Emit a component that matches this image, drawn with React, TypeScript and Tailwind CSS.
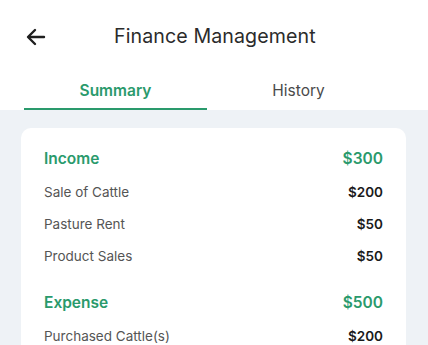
import React from "react";

interface Row {
  label: string;
  amount: string;
}

interface Section {
  title: string;
  total: string;
  rows: Row[];
}

const sections: Section[] = [
  {
    title: "Income",
    total: "$300",
    rows: [
      { label: "Sale of Cattle", amount: "$200" },
      { label: "Pasture Rent", amount: "$50" },
      { label: "Product Sales", amount: "$50" },
    ],
  },
  {
    title: "Expense",
    total: "$500",
    rows: [{ label: "Purchased Cattle(s)", amount: "$200" }],
  },
];

const App: React.FC = () => {
  return (
    <div className="w-[428px] h-[345px] overflow-hidden bg-[#eef2f6] font-['Inter','Noto_Sans',sans-serif]">
      {/* Header */}
      <div className="bg-white">
        <div className="flex items-center h-[73px] px-[24px]">
          <svg width="24" height="24" viewBox="0 0 24 24" fill="none" stroke="#1f1f1f" strokeWidth="2.4" strokeLinecap="round" strokeLinejoin="round">
            <path d="M20 12H5" />
            <path d="M11 5l-7 7 7 7" />
          </svg>
          <div className="ml-[66px] text-[19.6px] text-[#2b2b2b] tracking-[0.1px]">Finance Management</div>
        </div>

        {/* Tabs */}
        <div className="grid grid-cols-2 w-[366px] ml-[24px]">
          <div className="flex flex-col items-center">
            <div className="h-[35px] flex items-center text-[15.5px] font-semibold text-[#2a9a6c]">Summary</div>
            <div className="h-[2px] w-full bg-[#2a9a6c]" />
          </div>
          <div className="flex flex-col items-center">
            <div className="h-[35px] flex items-center text-[15.5px] text-[#4a4a4a]">History</div>
            <div className="h-[2px] w-full" />
          </div>
        </div>
      </div>

      {/* Card */}
      <div className="mt-[18px] ml-[21px] w-[385px] bg-white rounded-[10px] px-[23px] pt-[13px] pb-4">
        {sections.map((section, i) => (
          <div key={section.title} className={i > 0 ? "mt-[13px]" : ""}>
            <div className="flex justify-between items-center h-[35px] text-[15.5px] font-semibold text-[#2a9a6c]">
              <span>{section.title}</span>
              <span>{section.total}</span>
            </div>
            {section.rows.map((row) => (
              <div key={row.label} className="flex justify-between items-center h-[32px] text-[13.5px]">
                <span className="text-[#555555]">{row.label}</span>
                <span className="font-semibold text-[#1a1a1a]">{row.amount}</span>
              </div>
            ))}
          </div>
        ))}
      </div>
    </div>
  );
};

export default App;
